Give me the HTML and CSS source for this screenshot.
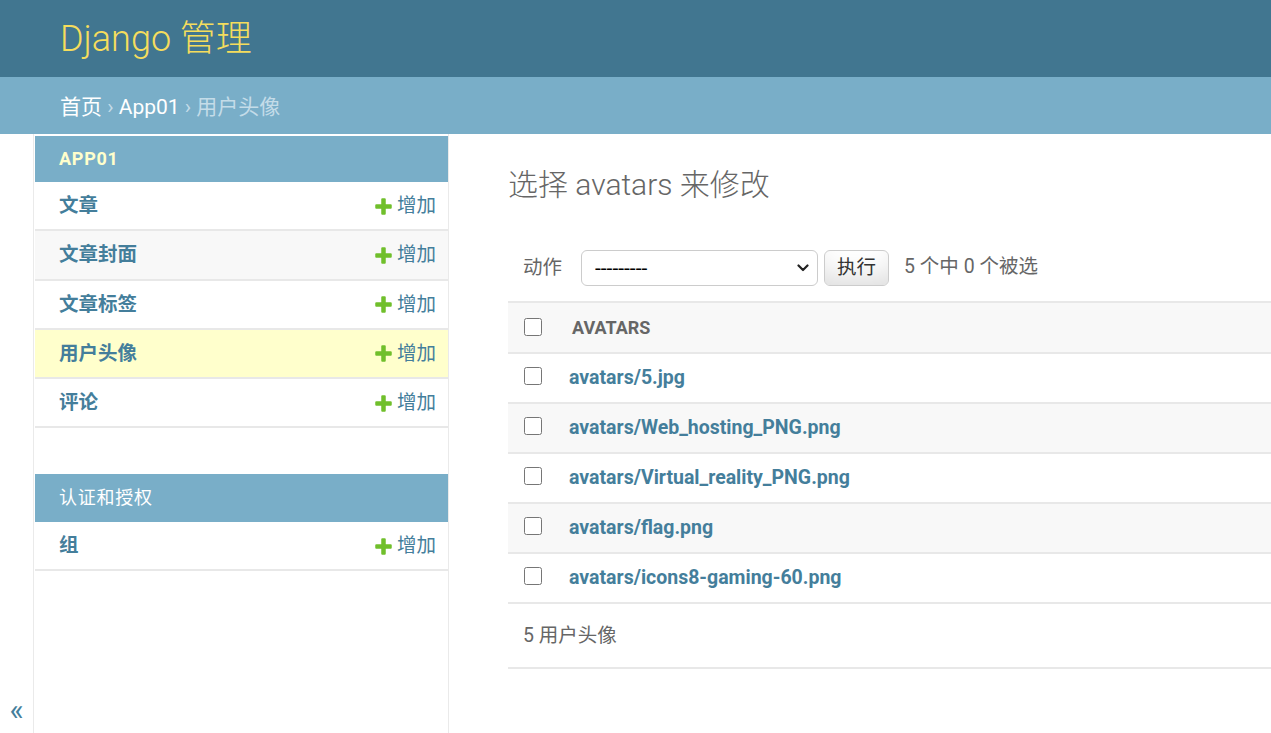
FILE: index.html
```html
<!DOCTYPE html>
<html lang="zh-hans">
<head>
<meta charset="utf-8">
<title>选择 avatars 来修改 | Django 站点管理员</title>
<link rel="stylesheet" href="styles.css">
</head>
<body>
<div class="header">
  <h1 class="brand">Django 管理</h1>
</div>
<div class="breadcrumbs">
  <a href="#">首页</a><span class="sep"> › </span><a href="#">App01</a><span class="sep"> › </span><span class="current">用户头像</span>
</div>
<div class="main">
  <button class="toggle" type="button">«</button>
  <nav class="sidebar">
    <div class="module">
      <div class="caption current-app">APP01</div>
      <div class="row">
        <a class="model" href="#">文章</a>
        <a class="addlink" href="#"><svg class="plus" viewBox="0 0 1792 1792"><path d="M1600 796v192q0 40-28 68t-68 28h-416v416q0 40-28 68t-68 28h-192q-40 0-68-28t-28-68v-416h-416q-40 0-68-28t-28-68v-192q0-40 28-68t68-28h416v-416q0-40 28-68t68-28h192q40 0 68 28t28 68v416h416q40 0 68 28t28 68z"/></svg>增加</a>
      </div>
      <div class="row alt">
        <a class="model" href="#">文章封面</a>
        <a class="addlink" href="#"><svg class="plus" viewBox="0 0 1792 1792"><path d="M1600 796v192q0 40-28 68t-68 28h-416v416q0 40-28 68t-68 28h-192q-40 0-68-28t-28-68v-416h-416q-40 0-68-28t-28-68v-192q0-40 28-68t68-28h416v-416q0-40 28-68t68-28h192q40 0 68 28t28 68v416h416q40 0 68 28t28 68z"/></svg>增加</a>
      </div>
      <div class="row">
        <a class="model" href="#">文章标签</a>
        <a class="addlink" href="#"><svg class="plus" viewBox="0 0 1792 1792"><path d="M1600 796v192q0 40-28 68t-68 28h-416v416q0 40-28 68t-68 28h-192q-40 0-68-28t-28-68v-416h-416q-40 0-68-28t-28-68v-192q0-40 28-68t68-28h416v-416q0-40 28-68t68-28h192q40 0 68 28t28 68v416h416q40 0 68 28t28 68z"/></svg>增加</a>
      </div>
      <div class="row current-model">
        <a class="model" href="#">用户头像</a>
        <a class="addlink" href="#"><svg class="plus" viewBox="0 0 1792 1792"><path d="M1600 796v192q0 40-28 68t-68 28h-416v416q0 40-28 68t-68 28h-192q-40 0-68-28t-28-68v-416h-416q-40 0-68-28t-28-68v-192q0-40 28-68t68-28h416v-416q0-40 28-68t68-28h192q40 0 68 28t28 68v416h416q40 0 68 28t28 68z"/></svg>增加</a>
      </div>
      <div class="row">
        <a class="model" href="#">评论</a>
        <a class="addlink" href="#"><svg class="plus" viewBox="0 0 1792 1792"><path d="M1600 796v192q0 40-28 68t-68 28h-416v416q0 40-28 68t-68 28h-192q-40 0-68-28t-28-68v-416h-416q-40 0-68-28t-28-68v-192q0-40 28-68t68-28h416v-416q0-40 28-68t68-28h192q40 0 68 28t28 68v416h416q40 0 68 28t28 68z"/></svg>增加</a>
      </div>
    </div>
    <div class="module">
      <div class="caption">认证和授权</div>
      <div class="row">
        <a class="model" href="#">组</a>
        <a class="addlink" href="#"><svg class="plus" viewBox="0 0 1792 1792"><path d="M1600 796v192q0 40-28 68t-68 28h-416v416q0 40-28 68t-68 28h-192q-40 0-68-28t-28-68v-416h-416q-40 0-68-28t-28-68v-192q0-40 28-68t68-28h416v-416q0-40 28-68t68-28h192q40 0 68 28t28 68v416h416q40 0 68 28t28 68z"/></svg>增加</a>
      </div>
    </div>
  </nav>
  <div class="content">
    <h1 class="title">选择 avatars 来修改</h1>
    <form class="changelist">
      <div class="actions">
        <label class="action-label">动作</label>
        <span class="select-wrap">
          <select class="action-select">
            <option>---------</option>
            <option>删除所选的 用户头像</option>
          </select>
          <svg class="chevron" viewBox="0 0 12 8"><path d="M1.5 1.5 L6 6 L10.5 1.5" fill="none" stroke="#222" stroke-width="2.2" stroke-linecap="round" stroke-linejoin="round"/></svg>
        </span>
        <button class="button" type="button">执行</button>
        <span class="counter">5 个中 0 个被选</span>
      </div>
      <table class="results">
        <thead>
          <tr>
            <th class="check"><input type="checkbox" class="cb head-cb"></th>
            <th class="col">AVATARS</th>
          </tr>
        </thead>
        <tbody>
          <tr><td class="check"><input type="checkbox" class="cb"></td><td class="col"><a href="#">avatars/5.jpg</a></td></tr>
          <tr class="alt"><td class="check"><input type="checkbox" class="cb"></td><td class="col"><a href="#">avatars/Web_hosting_PNG.png</a></td></tr>
          <tr><td class="check"><input type="checkbox" class="cb"></td><td class="col"><a href="#">avatars/Virtual_reality_PNG.png</a></td></tr>
          <tr class="alt"><td class="check"><input type="checkbox" class="cb"></td><td class="col"><a href="#">avatars/flag.png</a></td></tr>
          <tr><td class="check"><input type="checkbox" class="cb"></td><td class="col"><a href="#">avatars/icons8-gaming-60.png</a></td></tr>
        </tbody>
      </table>
      <p class="paginator">5 用户头像</p>
    </form>
  </div>
</div>
</body>
</html>
```
FILE: styles.css
```css
html, body {
  margin: 0;
  padding: 0;
}
body {
  font-family: Roboto, "Noto Sans CJK SC", sans-serif;
  font-size: 19.5px;
  color: #333;
  background: #fff;
  overflow: hidden;
}
a {
  text-decoration: none;
  color: #447e9b;
}

.header {
  background: #417690;
  padding: 16px 60px 14px;
  display: flex;
  align-items: center;
}
.brand {
  margin: 0;
  font-size: 36px;
  font-weight: 300;
  line-height: 47px;
  color: #f5dd5d;
}

.breadcrumbs {
  background: #79aec8;
  padding: 17px 60px 13px;
  font-size: 21px;
  line-height: 27px;
  color: #c4dce8;
}
.breadcrumbs a {
  color: #fff;
}

.main {
  display: flex;
  min-height: calc(100vh - 134px);
}
.toggle {
  box-sizing: border-box;
  flex: 0 0 34px;
  width: 34px;
  border: 0;
  border-right: 1px solid #eaeaea;
  background: #fff;
  padding: 0 0 8px 0;
  margin: 0;
  display: flex;
  align-items: flex-end;
  justify-content: center;
  font-family: Roboto, sans-serif;
  font-size: 30px;
  line-height: 30px;
  color: #447e9b;
}

.sidebar {
  flex: 0 0 413px;
  width: 413px;
  padding: 2px 0 0 1px;
  border-right: 1px solid #eaeaea;
}
.module {
  margin-bottom: 45.75px;
}
.caption {
  background: #79aec8;
  color: #fff;
  padding: 12px 24px;
  line-height: 22px;
  font-size: 18px;
  letter-spacing: 0.75px;
}
.caption.current-app {
  color: #ffc;
  font-weight: 700;
}
.module + .module .caption {
  line-height: 24px;
}
.row {
  box-sizing: border-box;
  height: 49.25px;
  display: flex;
  justify-content: space-between;
  align-items: center;
  padding: 1px 12px 0 24px;
  line-height: 24px;
  border-bottom: 2px solid #e8e8e8;
  background: #fff;
}
.row.alt {
  background: #f8f8f8;
}
.row.current-model {
  background: #ffc;
}
.model {
  font-weight: 700;
}
.addlink {
  display: inline-flex;
  align-items: center;
}
.plus {
  width: 21px;
  height: 21px;
  margin-right: 3px;
  fill: #70bf2b;
}

.content {
  flex: 1 1 auto;
  min-width: 0;
  padding: 30px 0 0 59px;
}
.title {
  margin: 0 0 30px;
  font-size: 30px;
  font-weight: 300;
  line-height: 41px;
  color: #666;
}
.changelist {
  margin: 0;
}
.actions {
  display: flex;
  align-items: center;
  padding: 15px 15px;
  color: #666;
  line-height: 24px;
}
.select-wrap {
  position: relative;
  display: inline-flex;
  margin-left: 19px;
}
.action-select {
  -webkit-appearance: none;
  appearance: none;
  box-sizing: border-box;
  width: 237px;
  height: 36px;
  border: 1px solid #ccc;
  border-radius: 6px;
  background: #fff;
  color: #000;
  font-family: Roboto, sans-serif;
  font-size: 21px;
  padding: 0 0 0 13px;
  margin: 0;
}
.chevron {
  position: absolute;
  right: 9px;
  top: 14px;
  width: 12px;
  height: 8px;
  pointer-events: none;
}
.button {
  box-sizing: border-box;
  margin-left: 6px;
  height: 36px;
  padding: 0 12px;
  border: 1px solid #ccc;
  border-radius: 6px;
  background: #fff;
  box-shadow: 0 -22px 30px -15px rgba(0, 0, 0, 0.15) inset;
  font-family: Roboto, "Noto Sans CJK SC", sans-serif;
  font-size: 19.5px;
  line-height: 1;
  color: #333;
}
.counter {
  margin-left: 15px;
  color: #666;
  position: relative;
  top: -1px;
}

.results {
  width: 100%;
  border-collapse: collapse;
}
.results th, .results td {
  text-align: left;
  padding: 12px;
  line-height: 24px;
  border-bottom: 2px solid #e8e8e8;
}
.results thead th {
  background: #f8f8f8;
  border-top: 2px solid #e8e8e8;
  height: 25px;
  vertical-align: middle;
  font-size: 18px;
  font-weight: 700;
  color: #666;
}
.results thead th.col {
  padding-left: 15px;
}
.results tbody td {
  vertical-align: top;
}
.results tbody tr.alt td {
  background: #f8f8f8;
}
.results .check {
  width: 25px;
  text-align: center;
}
.results .col a {
  font-weight: 700;
}
.cb {
  width: 18px;
  height: 18px;
  margin: 1px 0 0 0;
  vertical-align: top;
}
.head-cb {
  margin: 0 0 4px 0;
  vertical-align: middle;
}
.paginator {
  margin: 0;
  padding: 15px;
  line-height: 33px;
  border-bottom: 2px solid #e8e8e8;
  color: #666;
}
```
